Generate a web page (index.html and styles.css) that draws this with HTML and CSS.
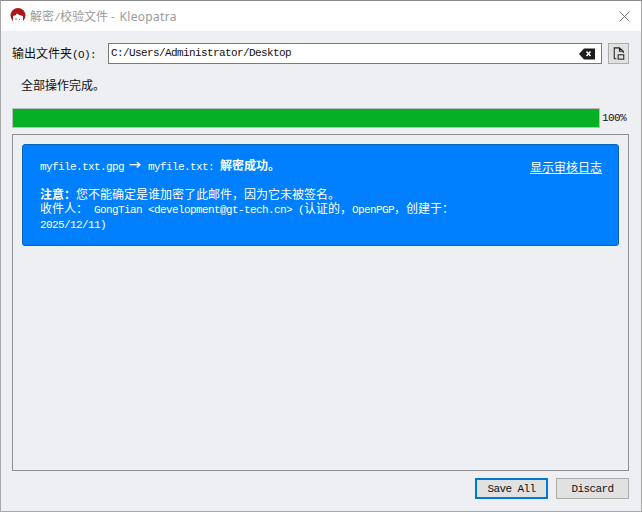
FILE: index.html
```html
<!DOCTYPE html>
<html lang="zh-CN">
<head>
    <meta charset="UTF-8">
    <meta name="viewport" content="width=device-width, initial-scale=1.0">
    <title>解密/校验文件 - Kleopatra</title>
    <link rel="stylesheet" href="styles.css">
</head>
<body>
<div class="window">
    <header class="titlebar">
        <svg class="logo" width="18" height="18" viewBox="0 0 18 18">
            <circle cx="9" cy="8.5" r="7.5" fill="#a81a1a"/>
            <path d="M4 15.500V9Q7 8.500 8 6.500Q10.500 8.500 14 9V15.500Q9 17 4 15.500Z" fill="#fff"/>
            <path d="M7 11v2M10 12l1 1" stroke="#777" stroke-width="1" fill="none"/>
        </svg>
        <span class="title">解密<span class="en">/</span>校验文件 - <span class="app">Kleopatra</span></span>
        <svg class="close" width="11" height="11" viewBox="0 0 11 11">
            <path d="M.5.5l10 10M10.500.5l-10 10" stroke="#777" stroke-width="1" fill="none"/>
        </svg>
    </header>
    <main class="content">
        <div class="output-row">
            <label class="output-label">输出文件夹<span class="en">(O):</span></label>
            <div class="path-input">
                <span class="en path">C:/Users/Administrator/Desktop</span>
                <svg width="16" height="12" viewBox="0 0 16 12">
                    <path d="M0 6L5 .5H16V11.500H5Z" fill="#1c1c1c"/>
                    <path d="M7.500 3.500l4 4.500M11.500 3.500l-4 4.500" stroke="#fff" stroke-width="1.500" fill="none"/>
                </svg>
            </div>
            <button class="icon-btn" type="button">
                <svg width="12" height="13" viewBox="0 0 13 15">
                    <path d="M3.500 13.500H1V1H7L11.500 5V7M7 1V5H11.500" stroke="#222" stroke-width="1.200" fill="none"/>
                    <rect x="5.500" y="9" width="6.500" height="5" stroke="#222" stroke-width="1.200" fill="none"/>
                </svg>
            </button>
        </div>
        <p class="status">全部操作完成。</p>
        <div class="progress-row">
            <div class="progress"><div class="progress-fill"></div></div>
            <span class="en percent">100%</span>
        </div>
        <section class="frame">
            <div class="result">
                <div class="result-head">
                    <span class="result-line"><span class="en">myfile.txt.gpg</span><span class="arrow">→</span><span class="en">myfile.txt: </span><b>解密成功。</b></span>
                    <a class="log-link">显示审核日志</a>
                </div>
                <div class="result-body">
                    <b>注意：</b>您不能确定是谁加密了此邮件，因为它未被签名。<br>
                    收件人：<span class="en"> GongTian &lt;development@gt-tech.cn&gt; (</span>认证的，<span class="en">OpenPGP</span>，创建于：<br>
                    <span class="en">2025/12/11)</span>
                </div>
            </div>
        </section>
        <footer class="actions">
            <button class="btn btn-default en" type="button">Save All</button>
            <button class="btn en" type="button">Discard</button>
        </footer>
    </main>
</div>
</body>
</html>
```

FILE: styles.css
```css
html, body {
    margin: 0;
    padding: 0;
}
body {
    width: 642px;
    height: 512px;
    overflow: hidden;
    font: 12px/14px "Noto Sans CJK SC", sans-serif;
    color: #111;
}
.en {
    font-family: "Liberation Mono", "Noto Sans CJK SC", monospace;
    font-size: 11px;
    line-height: 1;
    letter-spacing: -.6px;
    white-space: pre;
}
.window {
    box-sizing: border-box;
    width: 642px;
    height: 512px;
    display: flex;
    flex-direction: column;
    border: 1px solid #a8a8a8;
    border-top-color: #8a8a8a;
    background: #eeeff2;
}
.titlebar {
    flex: none;
    height: 30px;
    display: flex;
    align-items: center;
    padding: 0 11px 0 8px;
    background: #fff;
}
.logo {
    margin-right: 3px;
}
.title {
    flex: 1;
    color: #9a9a9a;
}
.app {
    margin-left: 2px;
    font-family: "Noto Sans", sans-serif;
    letter-spacing: .3px;
}
.content {
    flex: 1;
    display: flex;
    flex-direction: column;
    padding: 12px 12px 12px 11px;
}
.output-row {
    display: flex;
    align-items: center;
    height: 21px;
}
.output-label {
    width: 96px;
}
.path-input {
    box-sizing: border-box;
    width: 494px;
    height: 21px;
    display: flex;
    align-items: center;
    justify-content: space-between;
    padding: 0 6px 0 2px;
    background: #fff;
    border: 1px solid #7a7a7a;
}
.icon-btn {
    box-sizing: border-box;
    width: 21px;
    height: 21px;
    margin-left: 6px;
    padding: 0;
    display: flex;
    align-items: center;
    justify-content: center;
    background: #e1e1e1;
    border: 1px solid #adadad;
}
.status {
    margin: 14px 0 0 9px;
}
.progress-row {
    display: flex;
    align-items: center;
    margin-top: 16px;
}
.progress {
    box-sizing: border-box;
    width: 588px;
    height: 20px;
    background: #e6e6e6;
    border: 1px solid #bcbcbc;
}
.progress-fill {
    height: 100%;
    background: #06b025;
}
.percent {
    margin-left: 2px;
}
.frame {
    box-sizing: border-box;
    flex: 1;
    margin-top: 6px;
    padding: 9px;
    border: 1px solid #8c8f94;
}
.result {
    box-sizing: border-box;
    height: 102px;
    padding: 13px 16px 13px 17px;
    color: #fff;
    background: #0080ff;
    border: 1px solid #0a63b8;
    border-radius: 3px;
}
.result-head {
    display: flex;
    justify-content: space-between;
    align-items: flex-start;
}
.arrow {
    display: inline-block;
    width: 12px;
    margin: 0 7px 0 5px;
    font-weight: bold;
    text-align: center;
}
.log-link {
    margin-top: 2px;
    text-decoration: underline;
}
.result-body {
    margin-top: 13px;
}
.actions {
    flex: none;
    display: flex;
    justify-content: flex-end;
    gap: 8px;
    margin-top: 7px;
}
.btn {
    box-sizing: border-box;
    width: 73px;
    height: 21px;
    padding: 1px 0 0;
    color: #111;
    background: #e1e1e1;
    border: 1px solid #adadad;
}
.btn-default {
    border: 2px solid #0078d7;
}
```
